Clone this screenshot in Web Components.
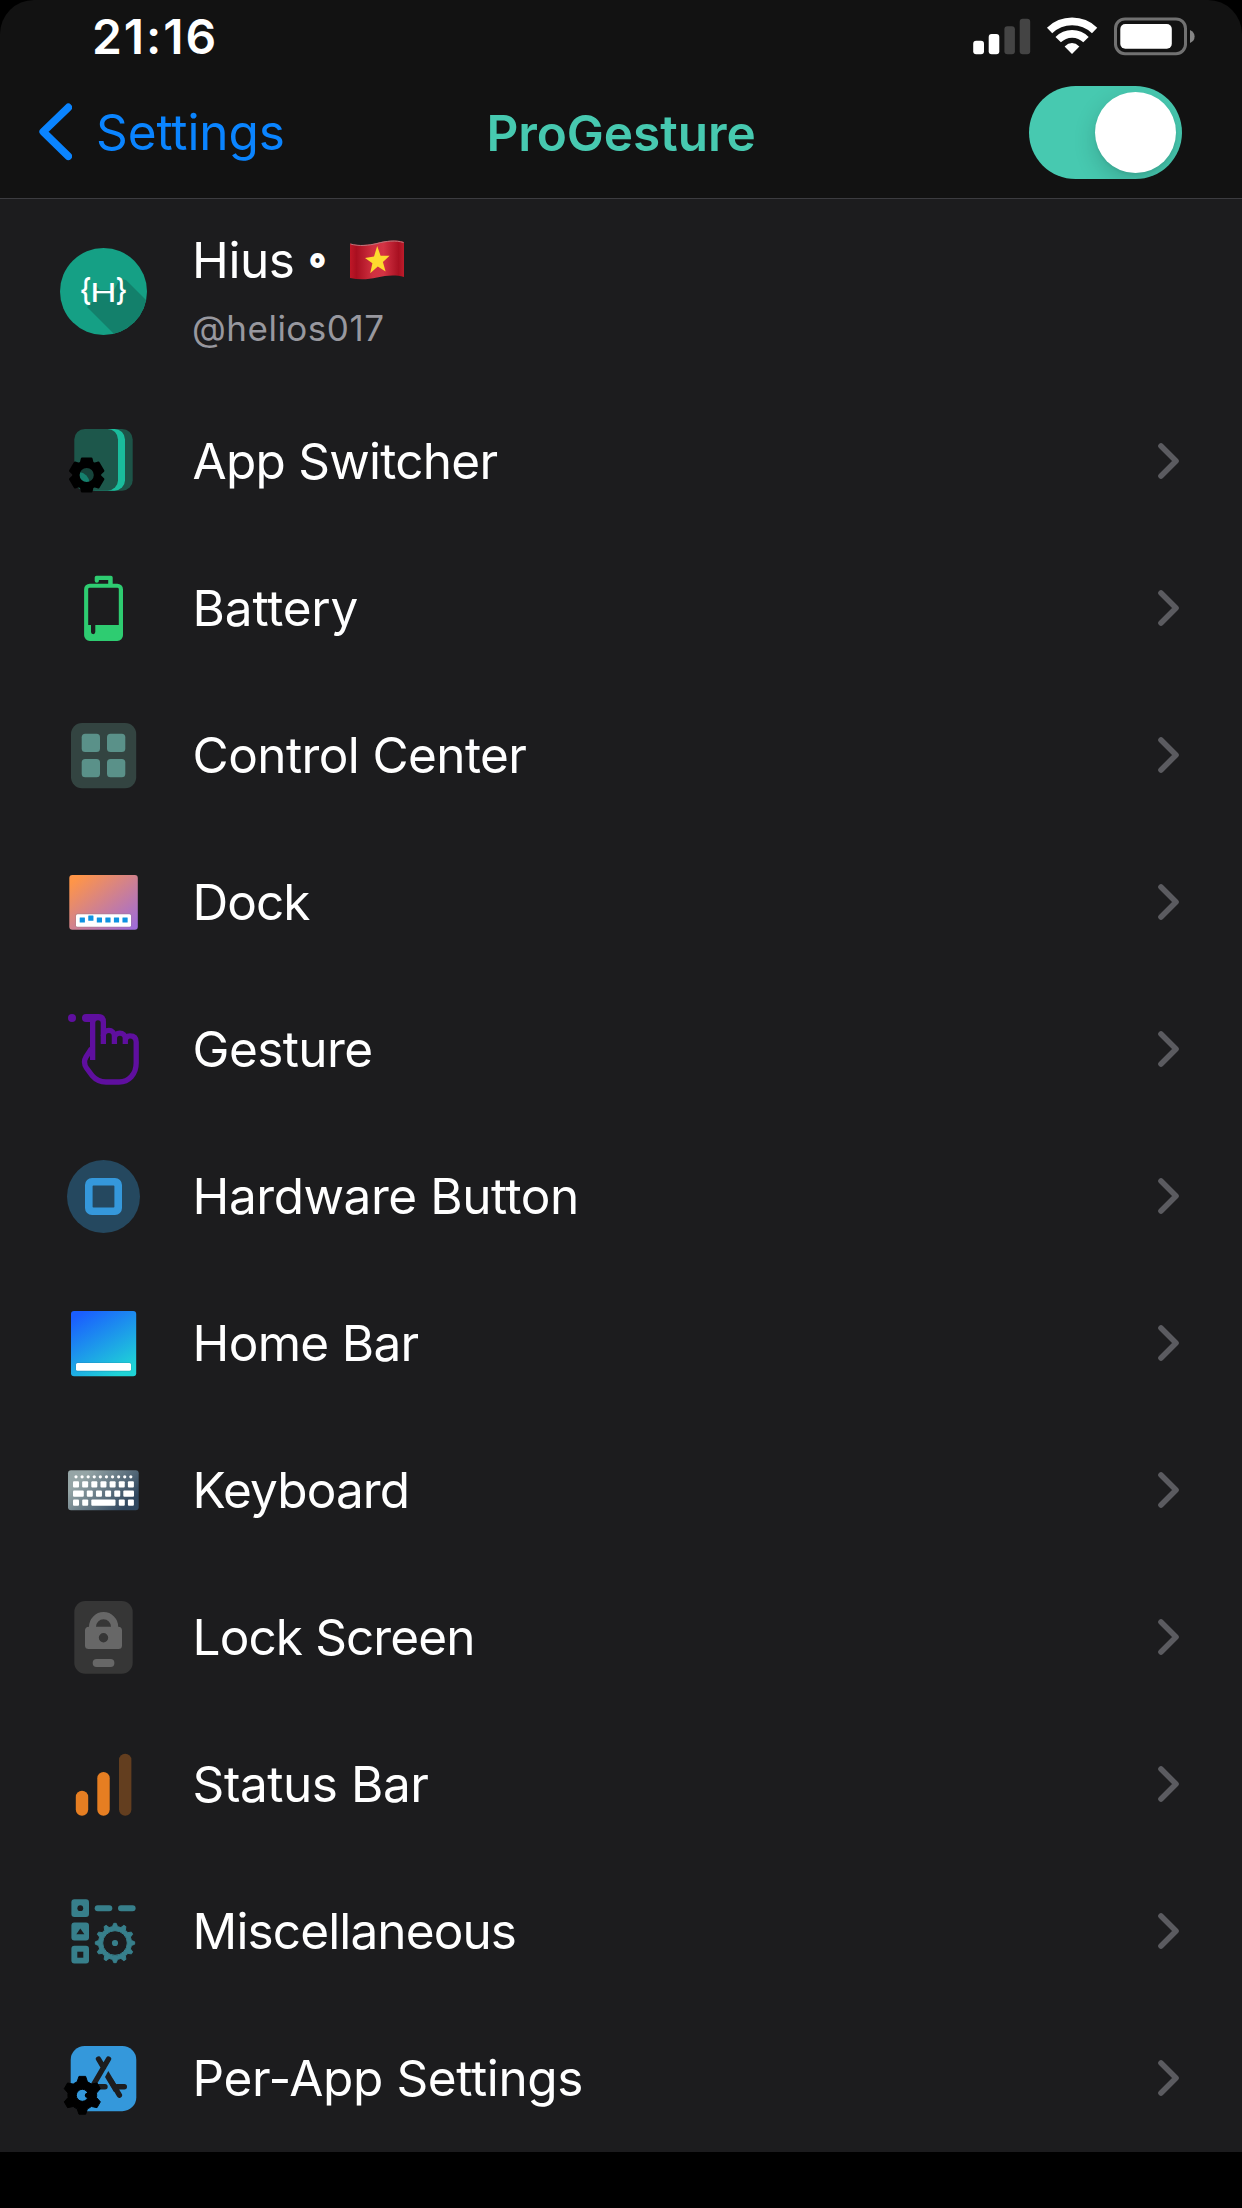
<!DOCTYPE html>
<html lang="en">
<head>
<meta charset="utf-8">
<title>ProGesture</title>
<style>
  html, body { margin: 0; background: #000; }
  body { font-family: Inter, "Liberation Sans", sans-serif; color: #fff; }
</style>
</head>
<body>
<settings-screen>
  <status-strip slot="top" time="21:16"></status-strip>
  <nav-bar slot="top" back="Settings">ProGesture<toggle-switch slot="action"></toggle-switch></nav-bar>
  <profile-row handle="@helios017">Hius</profile-row>
  <setting-row icon="switcher" style="letter-spacing:-.75px">App Switcher</setting-row>
  <setting-row icon="battery" style="letter-spacing:-.2px">Battery</setting-row>
  <setting-row icon="control" style="letter-spacing:-.6px">Control Center</setting-row>
  <setting-row icon="dock" style="letter-spacing:-1px">Dock</setting-row>
  <setting-row icon="gesture" style="letter-spacing:-.6px">Gesture</setting-row>
  <setting-row icon="hardware" style="letter-spacing:-.44px">Hardware Button</setting-row>
  <setting-row icon="homebar" style="letter-spacing:-.7px">Home Bar</setting-row>
  <setting-row icon="keyboard" style="letter-spacing:-.88px">Keyboard</setting-row>
  <setting-row icon="lock" style="letter-spacing:-.9px">Lock Screen</setting-row>
  <setting-row icon="status" style="letter-spacing:-.45px">Status Bar</setting-row>
  <setting-row icon="misc" style="letter-spacing:-.88px">Miscellaneous</setting-row>
  <setting-row icon="perapp" style="letter-spacing:-.36px">Per-App Settings</setting-row>
</settings-screen>

<script>
// Closed toothed outline: each tooth is a trapezoid of top half-angle a and root half-angle b (degrees).
function gear(cx, cy, R, r, n, a, b) {
  const p = (rad, deg) => {
    const t = deg * Math.PI / 180;
    return (cx + rad * Math.cos(t)).toFixed(2) + ' ' + (cy + rad * Math.sin(t)).toFixed(2);
  };
  let d = '';
  for (let i = 0; i < n; i++) {
    const m = -90 + i * 360 / n;
    d += (i ? 'L' : 'M') + p(r, m - b) + 'L' + p(R, m - a) + 'L' + p(R, m + a) + 'L' + p(r, m + b);
    d += 'A' + r + ' ' + r + ' 0 0 1 ' + p(r, m + 360 / n - b);
  }
  return d + 'Z';
}
const hole = (cx, cy, r) => `M${cx - r} ${cy}a${r} ${r} 0 1 0 ${2 * r} 0a${r} ${r} 0 1 0 ${-2 * r} 0Z`;
const rects = (list, rx) => list.map(([x, y, w, h]) => `<rect x="${x}" y="${y}" width="${w}" height="${h}" rx="${rx}"/>`).join('');
const seq = (n, f) => Array.from({ length: n }, (_, i) => f(i));

const ICONS = {
  switcher: `
    <rect x="30" y="11" width="42.7" height="61.7" rx="10.5" fill="#1d5448"/>
    <rect x="25" y="11" width="40" height="61.7" rx="10.5" fill="#1abc9c"/>
    <rect x="14.3" y="11" width="43.7" height="61.7" rx="10.5" fill="#1d574b"/>
    <circle cx="26.7" cy="57" r="9" fill="#16443b"/>
    <path d="M19 54a11 11 0 0 1 10.5 11L24 66l-5-5z" fill="#15806d"/>
    <path fill-rule="evenodd" stroke="#000" stroke-width="2.4" stroke-linejoin="round" d="${gear(26.7, 57, 17, 13.4, 6, 16, 25)}${hole(26.7, 57, 8.3)}"/>`,
  battery: `
    <g fill="#2ecc71"><path fill-rule="evenodd" d="M29.8 18.7H57.3A5.7 5.7 0 0 1 63 24.4V70.3A5.7 5.7 0 0 1 57.3 76H29.8A5.7 5.7 0 0 1 24.1 70.3V24.4A5.7 5.7 0 0 1 29.8 18.7ZM29.6 22.8Q28.2 22.8 28.2 24.2V60H31V67a2.15 2.15 0 0 0 4.3 0V60H58.8V24.2Q58.8 22.8 57.4 22.8Z"/>
    <path d="M34.7 15.7V12.5Q34.7 10.7 36.5 10.7H51Q52.7 10.7 52.7 12.5V19.5H48.2V15H38.9V15.7a2.1 2.1 0 0 1-4.2 0Z"/></g>`,
  control: `
    <rect x="11" y="11" width="65.2" height="65.2" rx="11" fill="#334441"/>
    <g fill="#5a9189">${rects([[21.7, 21.7, 18.3, 18.3], [47, 21.7, 18.3, 18.3], [21.7, 47, 18.3, 18.3], [47, 47, 18.3, 18.3]], 3.5)}</g>`,
  dock: `
    <linearGradient id="g" x1="0" y1="0" x2="1" y2="1"><stop offset=".08" stop-color="#ff9548"/><stop offset=".95" stop-color="#9f6cd8"/></linearGradient>
    <rect x="9.3" y="16" width="68.5" height="54.8" rx="3" fill="url(#g)"/>
    <rect x="15.4" y="54.6" width="56.2" height="13.8" rx="2" fill="#777" opacity=".35"/>
    <rect x="16" y="55.2" width="55" height="12.6" rx="1.5" fill="#fff"/>
    <g fill="#0d93e2">${rects(seq(6, i => [19.7 + 8.55 * i, i === 1 ? 56.6 : 58.4, 5.2, 5.2]), .4)}</g>`,
  gesture: `
    <circle cx="12" cy="12" r="4" fill="#5f0f9f"/>
    <path fill="#5f0f9f" d="M26 8H38.5Q46 8 46 16V38H40.7V17a2.65 2.65 0 0 0-5.4 0V54H30V16H26a4 4 0 0 1 0-8z"/>
    <path fill="none" stroke="#5f0f9f" stroke-width="5.3" d="M43.3 30a5.55 5.55 0 0 1 11.1 0V38M54.4 32.5a5.45 5.45 0 0 1 10.9 0V38M65.3 35.2C65.3 31.5 67 29.8 70 29.8C74 29.8 76.2 32 76.2 36V57C76.2 68 69 76 59 76H46C40 76 36 74 32.5 70L26.5 62C23.8 58 23.8 54.5 26 51L31.5 42.5"/>`,
  hardware: `
    <circle cx="43.5" cy="43.5" r="36.5" fill="#25485f"/>
    <path fill="#3598db" fill-rule="evenodd" d="M32 25H55A7 7 0 0 1 62 32V55A7 7 0 0 1 55 62H32A7 7 0 0 1 25 55V32A7 7 0 0 1 32 25ZM33.4 32.5Q32.6 32.5 32.6 33.3V53.7Q32.6 54.5 33.4 54.5H53.6Q54.4 54.5 54.4 53.7V33.3Q54.4 32.5 53.6 32.5Z"/>`,
  homebar: `
    <linearGradient id="g" x1=".2" y1="0" x2=".8" y2="1"><stop offset="0" stop-color="#1a5eff"/><stop offset=".95" stop-color="#1fd3d6"/></linearGradient>
    <rect x="11" y="11" width="65.2" height="65.2" rx="3" fill="url(#g)"/>
    <rect x="15.5" y="62.5" width="56" height="9" rx="2" fill="#234" opacity=".2"/>
    <rect x="16" y="63" width="55" height="7.8" rx="1.5" fill="#fff"/>`,
  keyboard: `
    <linearGradient id="g" gradientUnits="userSpaceOnUse" x1="22" y1="22" x2="65" y2="65"><stop offset=".1" stop-color="#95a5a6"/><stop offset=".95" stop-color="#30475f"/></linearGradient>
    <rect x="8" y="23.3" width="70.7" height="40" rx="3" fill="url(#g)"/>
    <g fill="#fff">${seq(10, i => `<circle cx="${16 + 6.09 * i}" cy="29.8" r="1.6"/>`).join('')}
    ${rects(seq(7, i => [13 + 9.15 * i, 34.3, 6, 6.2]), 1)}
    ${rects([[13, 43.5, 10.8, 6.2], ...seq(4, i => [26.8 + 9.15 * i, 43.5, 6, 6.2]), [63.3, 43.5, 10.7, 6.2]], 1)}
    ${rects([[13, 52.6, 6, 6.2], [22.2, 52.6, 6, 6.2], [31.3, 52.6, 24.2, 6.2], [58.8, 52.6, 6, 6.2], [67.9, 52.6, 6, 6.2]], 1)}</g>`,
  lock: `
    <rect x="14.3" y="7" width="58.4" height="72.8" rx="11" fill="#363636"/>
    <g fill="#676767"><path fill-rule="evenodd" d="M29 32.7A14.6 14.6 0 0 1 58.2 32.7Q62 32.7 62 36.5V51.5Q62 55.1 58.4 55.1H28.7Q25 55.1 25 51.5V36.5Q25 32.7 29 32.7ZM36 32.7H51A7.5 7.5 0 0 0 36 32.7Z${hole(43.5, 43.7, 4.7)}"/>
    <rect x="32.7" y="65" width="21.7" height="7.9" rx="3.9"/></g>`,
  status: `
    <g fill="#e67e22">${rects([[15.8, 49.7, 12.4, 25], [37.3, 31, 12.4, 43.7]], 6.2)}</g>
    <rect x="59" y="12.7" width="12.4" height="62" rx="6.2" fill="#633e1f"/>`,
  misc: `
    <g fill="#377f8b" fill-rule="evenodd">
    ${rects([[11.4, 11.3, 17.6, 17.8], [11.4, 34.6, 17.6, 17.8], [11.4, 57.8, 17.6, 17.8]], 3)}
    ${rects([[34.7, 17.3, 17.6, 5.9], [58, 17.3, 17.6, 5.9]], 2.95)}
    <path stroke="#377f8b" stroke-width="1" stroke-linejoin="round" d="${gear(55, 55, 19.7, 16.5, 12, 3.5, 9)}${hole(55, 55, 12.3)}"/>
    <circle cx="55" cy="55" r="3.1"/></g>
    <g fill="#1c1c1e"><circle cx="20.3" cy="20.2" r="2.9"/><path d="M20.3 40.6L24.4 46.2H16.3Z"/><rect x="17.3" y="63.7" width="6" height="6"/></g>`,
  perapp: `
    <rect x="10.7" y="11" width="65.6" height="65.2" rx="14" fill="#3498db"/>
    <g stroke="#1d1d1f" stroke-width="5.4" stroke-linecap="round" fill="none"><path d="M48.5 24L32.3 51.7H45M38.5 24L43.5 32.5M57 51.7H64.3M51 46L59.4 60.2"/></g>
    <path fill="#1d1d1f" d="M48.3 36L45 42L54 57L59 54Z"/>
    <circle cx="27.5" cy="60.3" r="2.6"/>
    <path fill-rule="evenodd" stroke="#000" stroke-width="1" stroke-linejoin="round" d="${gear(22.3, 60.3, 19.2, 14.4, 6, 10, 21)}${hole(22.3, 60.3, 6)}"/>`
};

function define(name, html, setup) {
  const tpl = document.createElement('template');
  tpl.innerHTML = html;
  customElements.define(name, class extends HTMLElement {
    constructor() {
      super();
      this.attachShadow({ mode: 'open' }).append(tpl.content.cloneNode(true));
    }
    connectedCallback() { if (setup) setup(this, this.shadowRoot); }
  });
}

define('settings-screen', `
  <style>
    :host { display: flex; flex-direction: column; width: 1242px; height: 2208px; background: #000; overflow: hidden; }
    header { background: #121212; border-bottom: 1px solid #3c3c40; border-radius: 34px 34px 0 0; height: 198px; }
    main { display: flex; flex-direction: column; background: #1c1c1e; height: 1953px; }
  </style>
  <header><slot name="top"></slot></header>
  <main><slot></slot></main>`);

define('status-strip', `
  <style>
    :host { display: flex; justify-content: space-between; align-items: center; height: 66px; padding: 6px 47px 0 92px; box-sizing: border-box; }
    time { font-size: 48px; font-weight: 600; letter-spacing: 1.9px; line-height: 60px; padding-top: 2px; }
    .icons { display: flex; }
    svg { display: block; }
  </style>
  <time></time>
  <div class="icons">
    <svg width="222" height="60" viewBox="973 6 222 60">
      <g fill="#fff"><rect x="973.2" y="40.7" width="10.8" height="13.6" rx="3"/><rect x="988.7" y="34" width="10.6" height="20.3" rx="3"/></g>
      <g fill="#444"><rect x="1004.4" y="26.2" width="10.5" height="28.1" rx="3"/><rect x="1019.7" y="18.7" width="10.5" height="35.6" rx="3"/></g>
      <g fill="none" stroke="#fff" stroke-width="7.6"><path d="M1049.6 30.4A32.5 32.5 0 0 1 1094.6 30.4"/><path d="M1058.2 39.7A19.5 19.5 0 0 1 1086 39.7"/></g>
      <path d="M1072 54L1064.6 46.4Q1072 39.6 1079.4 46.4Z" fill="#fff"/>
      <rect x="1115.5" y="18.9" width="70" height="34.8" rx="9.5" fill="none" stroke="#717171" stroke-width="3"/>
      <rect x="1120.3" y="24" width="51.5" height="24.8" rx="5" fill="#fff"/>
      <path d="M1190 30Q1194.6 32 1194.6 36.5Q1194.6 41 1190 43Z" fill="#858585"/>
    </svg>
  </div>`, (el, root) => { root.querySelector('time').textContent = el.getAttribute('time'); });

define('nav-bar', `
  <style>
    :host { display: grid; grid-template-columns: 450px 1fr 450px; align-items: center; height: 132px; font-size: 49.5px; line-height: 60px; color: #47c9b0; }
    .back { display: flex; align-items: center; gap: 24px; padding-left: 38px; color: #0a84ff; letter-spacing: -.1px; }
    h1 { margin: 0; font-size: inherit; font-weight: 600; text-align: center; letter-spacing: -.06px; padding-top: 2px; }
    .action { display: flex; justify-content: flex-end; padding-right: 60px; }
    svg { display: block; }
  </style>
  <div class="back"><svg width="34" height="58" viewBox="38 103 34 58"><path d="M68.3 107.4L43.2 131.7L68.3 156.3" fill="none" stroke="#0a84ff" stroke-width="7.6" stroke-linecap="round" stroke-linejoin="round"/></svg><span></span></div>
  <h1><slot></slot></h1>
  <div class="action"><slot name="action"></slot></div>`,
  (el, root) => { root.querySelector('span').textContent = el.getAttribute('back'); });

define('toggle-switch', `
  <style>
    :host { display: flex; justify-content: flex-end; box-sizing: border-box; width: 153px; height: 93px; padding: 6px; border-radius: 47px; background: #47c9b0; overflow: hidden; }
    i { width: 81px; height: 81px; border-radius: 50%; background: #fff; box-shadow: 0 8px 22px rgba(0,0,0,.17), 0 2px 3px rgba(0,0,0,.06); }
  </style><i></i>`);

define('profile-row', `
  <style>
    :host { display: flex; align-items: center; height: 189px; box-sizing: border-box; padding: 0 60px 4px; font-size: 49.5px; line-height: 60px; }
    svg { display: block; }
    .text { margin-left: 45px; padding-top: 4px; }
    .name { display: flex; align-items: center; letter-spacing: -.4px; }
    .ring { font-size: 40px; font-weight: 700; width: 42px; margin: -3px 0 0 13.5px; -webkit-text-stroke: 1.8px #fff; }
    .handle { margin-top: 8px; font-size: 35px; letter-spacing: .5px; color: #98989f; }
  </style>
  <svg width="87" height="87" viewBox="0 0 87 87">
    <clipPath id="c"><circle cx="43.5" cy="43.5" r="43.5"/></clipPath>
    <g clip-path="url(#c)"><rect width="87" height="87" fill="#15a085"/>
    <path d="M27 59L34 52V36L40 42H54L60 31L66 32L100 66V100H68Z" fill="#13806b"/></g>
    <g fill="#fff" font-family="Inter, sans-serif">
      <text x="19.5" y="53.2" font-size="31" font-weight="500" textLength="12" lengthAdjust="spacingAndGlyphs">{</text>
      <text x="30.1" y="53.6" font-size="26" font-weight="400" textLength="26.8" lengthAdjust="spacingAndGlyphs">H</text>
      <text x="55.6" y="53.2" font-size="31" font-weight="500" textLength="12" lengthAdjust="spacingAndGlyphs">}</text>
    </g>
  </svg>
  <div class="text">
    <div class="name"><slot></slot><span class="ring">◦</span>
      <svg width="54" height="40" viewBox="0 0 54 40">
        <linearGradient id="f"><stop offset="0" stop-color="#c01727"/><stop offset=".12" stop-color="#a90f20"/><stop offset=".42" stop-color="#cf3040"/><stop offset=".62" stop-color="#d43344"/><stop offset=".9" stop-color="#a81021"/><stop offset="1" stop-color="#bd1c2b"/></linearGradient>
        <path d="M0 3.5C9 6 19 5 27 3C36 .5 46 -.5 54 2V37C45 34.5 36 35.5 27 37.5C18 39.6 9 40 0 38Z" fill="url(#f)"/>
        <path d="M.5 4C9 6.5 19 5.5 27 3.5C36 1 46 0 53.5 2.5" stroke="#b9767c" stroke-width="1" fill="none"/>
        <path d="M27.2 6L30.6 15.7L39.6 15.8L32.9 22L35.6 31.6L27.8 26.6L20.2 33.2L22.4 23.2L15 18L24 16.6Z" fill="#fedb2e"/>
      </svg>
    </div>
    <div class="handle"></div>
  </div>`, (el, root) => { root.querySelector('.handle').textContent = el.getAttribute('handle'); });

define('setting-row', `
  <style>
    :host { display: flex; align-items: center; height: 147px; box-sizing: border-box; padding: 0 62px 0 60px; font-size: 49.5px; line-height: 60px; }
    svg { display: block; flex: none; }
    .label { flex: 1; margin-left: 45.6px; padding-bottom: 2px; }
  </style>
  <svg class="icon" width="87" height="87" viewBox="0 0 87 87"></svg>
  <div class="label"><slot></slot></div>
  <svg width="22" height="37" viewBox="0 0 22 37"><path d="M3 3L18 18L3 33" fill="none" stroke="#5b5b60" stroke-width="5.6" stroke-linecap="round" stroke-linejoin="round"/></svg>`,
  (el, root) => { root.querySelector('.icon').innerHTML = ICONS[el.getAttribute('icon')]; });
</script>
</body>
</html>
